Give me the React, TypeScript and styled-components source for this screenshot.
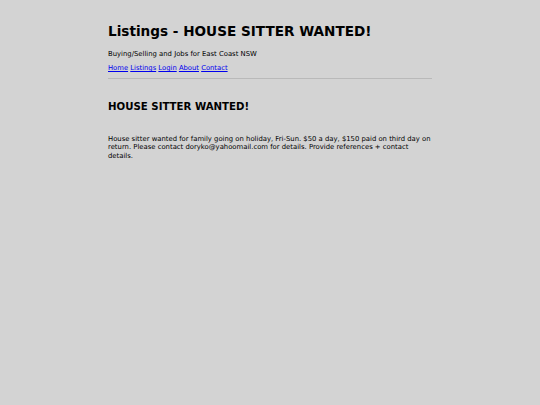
import styled, { createGlobalStyle } from 'styled-components';

const GlobalStyle = createGlobalStyle`
  html, body {
    margin: 0;
    padding: 0;
    background: #d3d3d3;
  }
  body {
    font-family: "DejaVu Sans", Verdana, sans-serif;
    color: #000;
  }
`;

const Page = styled.div`
  width: 60%;
  margin: 0 auto;
  padding-top: 23px;
`;

const Header = styled.header`
  border-bottom: 1px solid #b9b9b9;
  padding-bottom: 5px;
`;

const Title = styled.h1`
  font-size: 13.6px;
  line-height: 16px;
  font-weight: bold;
  margin: 0 0 11px;
`;

const Tagline = styled.p`
  font-size: 6.85px;
  line-height: 9px;
  margin: 0 0 5px;
`;

const Nav = styled.nav`
  font-size: 6.8px;
  line-height: 9px;

  a {
    color: #0000ee;
  }
`;

const PostTitle = styled.h2`
  font-size: 10.2px;
  line-height: 12px;
  font-weight: bold;
  margin: 22px 0 21.5px;
`;

const Body = styled.p`
  font-size: 6.85px;
  line-height: 8.6px;
  margin: 0;
`;

export default function App() {
  return (
    <>
      <GlobalStyle />
      <Page>
        <Header>
          <Title>Listings - HOUSE SITTER WANTED!</Title>
          <Tagline>Buying/Selling and Jobs for East Coast NSW</Tagline>
          <Nav>
            <a href="#">Home</a> <a href="#">Listings</a> <a href="#">Login</a>{' '}
            <a href="#">About</a> <a href="#">Contact</a>
          </Nav>
        </Header>
        <PostTitle>HOUSE SITTER WANTED!</PostTitle>
        <Body>
          House sitter wanted for family going on holiday, Fri-Sun. $50 a day, $150 paid on third day on
          return. Please contact doryko@yahoomail.com for details. Provide references + contact details.
        </Body>
      </Page>
    </>
  );
}
